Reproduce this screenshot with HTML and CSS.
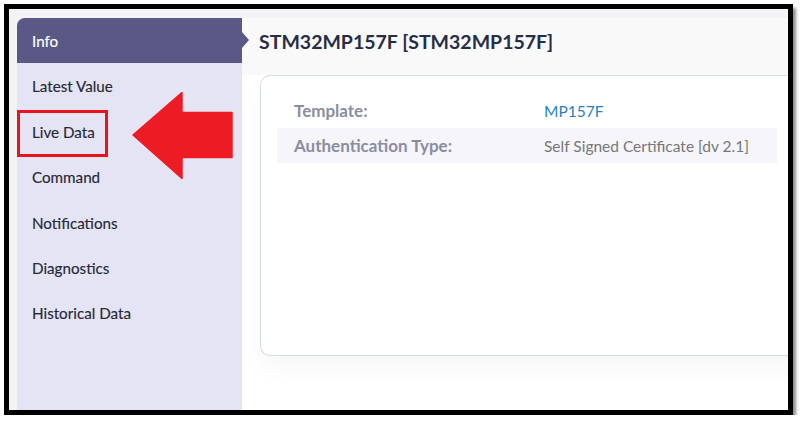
FILE: index.html
```html
<!DOCTYPE html>
<html lang="en">
<head>
<meta charset="utf-8">
<title>STM32MP157F</title>
<link rel="stylesheet" href="styles.css">
</head>
<body>
<div class="shot">
  <div class="inner">
    <div class="app">
      <nav class="sidebar">
        <div class="nav-item active">Info</div>
        <div class="nav-item">Latest Value</div>
        <div class="nav-item">Live Data</div>
        <div class="nav-item">Command</div>
        <div class="nav-item">Notifications</div>
        <div class="nav-item">Diagnostics</div>
        <div class="nav-item">Historical Data</div>
      </nav>
      <main class="main">
        <header class="header">
          <h1 class="title">STM32MP157F [STM32MP157F]</h1>
        </header>
        <section class="body">
          <div class="card">
            <div class="row">
              <div class="label">Template:</div>
              <div class="value link">MP157F</div>
            </div>
            <div class="row alt">
              <div class="label">Authentication Type:</div>
              <div class="value">Self Signed Certificate [dv 2.1]</div>
            </div>
          </div>
        </section>
      </main>
    </div>
    <div class="highlight"></div>
    <svg class="arrow" width="102" height="88" viewBox="0 0 102 88">
      <polygon points="1,43 50,0.5 50,20.5 100,20.5 100,65.5 50,65.5 50,86.5" fill="#ed1c24" stroke="#ed1c24" stroke-width="1.5" stroke-linejoin="round"/>
    </svg>
  </div>
</div>
</body>
</html>
```

FILE: styles.css
```css
* { box-sizing: border-box; }
html, body { margin: 0; padding: 0; background: #ffffff; }
body { font-family: Lato, "Open Sans", sans-serif; }

.shot {
  margin: 4px 0 0 4px;
  width: 789px;
  height: 411px;
  border: 5px solid #000;
  box-shadow: 3px 4px 3px rgba(0, 0, 0, 0.45);
  overflow: hidden;
}

.inner {
  position: relative;
  height: 100%;
  padding: 9px 0 0 8px;
  background: #f4f4f6;
  display: flex;
}

.app {
  flex: 1;
  display: flex;
  min-width: 0;
}

.sidebar {
  width: 225px;
  flex: none;
  background: #e5e4f4;
  border-top-left-radius: 8px;
  position: relative;
  z-index: 1;
}

.nav-item {
  padding: 12px 15px 10px;
  line-height: 23.4px;
  font-size: 15.2px;
  color: #262838;
  position: relative;
  -webkit-text-stroke: 0.15px #262838;
}

.nav-item.active {
  background: #5a5986;
  color: #ffffff;
  -webkit-text-stroke: 0.15px #ffffff;
  border-top-left-radius: 8px;
}

.nav-item.active::after {
  content: "";
  position: absolute;
  right: -7px;
  top: 14px;
  border-top: 8px solid transparent;
  border-bottom: 8px solid transparent;
  border-left: 7px solid #5a5986;
}

.main {
  flex: 1;
  min-width: 0;
  display: flex;
  flex-direction: column;
  background: #ffffff;
  overflow: hidden;
}

.header {
  height: 57px;
  flex: none;
  background: #f9f9fa;
  padding: 12px 0 0 17px;
}

.title {
  margin: 0;
  font-size: 19.5px;
  line-height: 24px;
  font-weight: 700;
  color: #272d44;
  white-space: nowrap;
}

.body {
  flex: 1;
  padding-left: 18px;
}

.card {
  width: 560px;
  height: 281px;
  border: 1px solid #d4dde0;
  border-right: none;
  border-radius: 10px 0 0 10px;
  background: #ffffff;
  padding: 17px 0 0 16px;
  box-shadow: 0 12px 22px rgba(0, 0, 0, 0.035);
}

.row {
  width: 500px;
  height: 35px;
  display: flex;
  align-items: center;
  padding-left: 17px;
}

.row.alt { background: #f5f5fa; }

.label {
  width: 250px;
  flex: none;
  font-size: 17px;
  font-weight: 700;
  color: #8a8da0;
}

.value {
  font-size: 15.5px;
  color: #777779;
}

.value.link { color: #2a7fc3; }

.highlight {
  position: absolute;
  left: 8px;
  top: 101px;
  width: 91px;
  height: 47px;
  border: 3px solid #e8141c;
  z-index: 2;
}

.arrow {
  position: absolute;
  left: 123px;
  top: 83px;
  z-index: 2;
}
```
